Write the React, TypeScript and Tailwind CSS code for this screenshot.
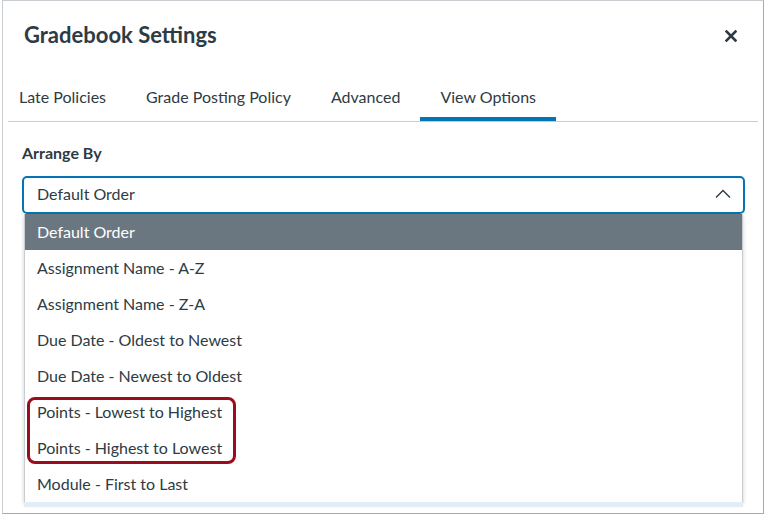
import React from 'react';

const tabs = ['Late Policies', 'Grade Posting Policy', 'Advanced', 'View Options'];

const options = [
  'Default Order',
  'Assignment Name - A-Z',
  'Assignment Name - Z-A',
  'Due Date - Oldest to Newest',
  'Due Date - Newest to Oldest',
  'Points - Lowest to Highest',
  'Points - Highest to Lowest',
  'Module - First to Last',
];

const App: React.FC = () => {
  return (
    <div className="w-[766px] h-[516px] bg-white overflow-hidden" style={{ fontFamily: 'Lato, "Open Sans", sans-serif' }}>
      <div className="ml-[2px] w-[762px] h-[514px] bg-white border border-[#c9cdd1] border-r-[#a9a9a9] border-b-[#a9a9a9] overflow-hidden text-[#2d3b45]">
        {/* Header */}
        <div className="h-[73px] flex items-center justify-between pl-[21px] pr-[26px] pb-[7px]">
          <h1 className="text-[22px] font-bold">Gradebook Settings</h1>
          <svg width="12" height="12" viewBox="0 0 12 12" className="mt-[3px]">
            <path d="M1.5 1.5 L10.5 10.5 M10.5 1.5 L1.5 10.5" stroke="#2d3b45" strokeWidth="2.6" strokeLinecap="square" />
          </svg>
        </div>

        {/* Tabs */}
        <div className="mx-[5px] border-b border-[#c7cdd1]">
          <div className="flex -ml-[9px]">
            {tabs.map((t) => (
              <div
                key={t}
                className={
                  'h-[47px] px-[20px] pt-[2px] flex items-center text-[16px] border-b-[4px] ' +
                  (t === 'View Options' ? 'border-[#0374b5]' : 'border-transparent')
                }
              >
                {t}
              </div>
            ))}
          </div>
        </div>

        {/* Body */}
        <div className="pl-[19px] pr-[18px] pt-[19px]">
          <div className="text-[16px] font-bold leading-[24px]">Arrange By</div>
          <div className="mt-[11px] h-[38px] border-2 border-[#0374b5] rounded-[5px] flex items-center justify-between pl-[13px] pr-[12px] pb-[3px] text-[16px]">
            <span>Default Order</span>
            <svg width="16" height="10" viewBox="0 0 16 10">
              <polyline points="1,8.5 8,1.5 15,8.5" fill="none" stroke="#2d3b45" strokeWidth="1.4" />
            </svg>
          </div>

          {/* Menu */}
          <div className="mx-[2px] relative">
            <div className="border-x border-[#c7cdd1] shadow-[0_2px_4px_rgba(0,0,0,0.2)] bg-white">
              {options.map((o, i) => (
                <div
                  key={o}
                  className={
                    'h-[36px] flex items-center px-[12px] text-[16px] ' +
                    (i === 0 ? 'bg-[#6b7780] text-white' : 'text-[#2d3b45]')
                  }
                >
                  {o}
                </div>
              ))}
            </div>
            <div className="h-[5px] bg-[#e3edf5]" />
            <div className="absolute left-[3px] top-[183px] w-[209px] h-[67px] border-[3px] border-[#9a0d1c] rounded-[8px]" />
          </div>
        </div>
      </div>
    </div>
  );
};

export default App;
